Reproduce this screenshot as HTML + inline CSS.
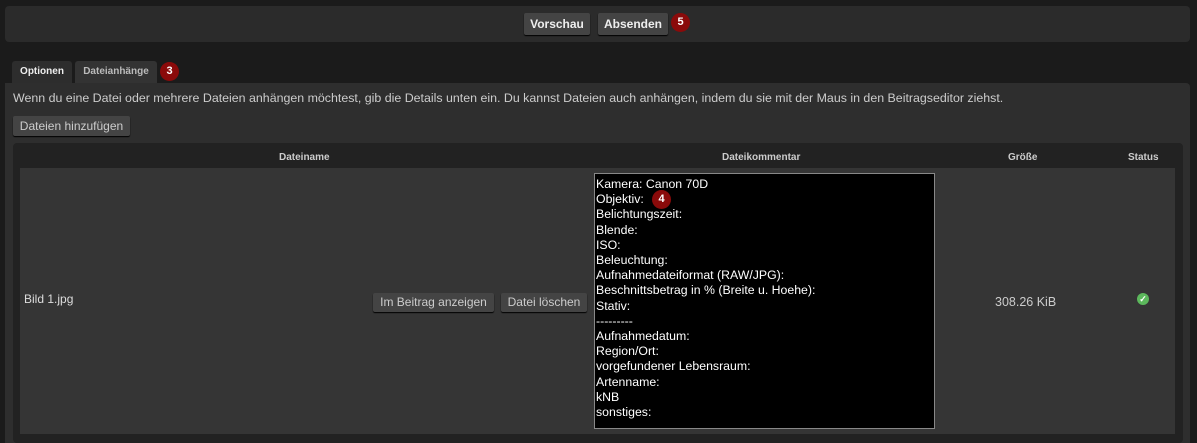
<!DOCTYPE html>
<html><head><meta charset="utf-8"><style>
*{box-sizing:border-box;margin:0;padding:0}
body{width:1197px;height:438px;overflow:hidden;background:#1b1b1b;font-family:"Liberation Sans",sans-serif;font-size:12px;color:#ddd;position:relative}
.abs{position:absolute}
.bar{left:5px;top:6px;width:1185px;height:36px;background:#2b2b2b;border-radius:4px}
.btn{position:absolute;background:#444;color:#eee;border-radius:2px;text-align:center;box-shadow:0 1px 1px #000}
.b5{font-weight:bold;font-size:12px;height:22px;line-height:22px}
.badge{position:absolute;width:19px;height:19px;border-radius:50%;background:#8a0a0a;color:#fff;font-weight:bold;font-size:11px;text-align:center;line-height:19px}
.tab{position:absolute;top:61px;height:22px;line-height:22px;background:#2d2d2d;border-radius:3px 3px 0 0;font-weight:bold;font-size:10px;text-align:center}
.panel{left:5px;top:83px;width:1185px;height:360px;background:#2e2e2e;border-radius:0 4px 0 0}
.tbl{left:13px;top:143px;width:1170px;height:300px;background:#222;border-radius:4px}
.row{left:20px;top:168px;width:1155px;height:266px;background:#353535}
.th{position:absolute;top:152px;font-weight:bold;font-size:10px;color:#ccc}
.ta{left:594px;top:173px;width:341px;height:256px;background:#000;border:1px solid #888;color:#fff;padding:3px 0 0 1px;line-height:15.2px;font-size:12.3px;white-space:pre}
</style></head><body>
<div class="abs bar"></div>
<div class="btn b5" style="left:524px;top:13px;width:66px">Vorschau</div>
<div class="btn b5" style="left:598px;top:13px;width:70px">Absenden</div>
<div class="badge" style="left:671px;top:13px">5</div>
<div class="abs panel"></div>
<div class="tab" style="left:12px;width:60px;color:#eee">Optionen</div>
<div class="tab" style="left:75px;width:82px;background:#333;color:#bbb">Dateianhänge</div>
<div class="badge" style="left:160px;top:62px">3</div>
<div class="abs" style="left:13px;top:91px;color:#ccc;font-size:12.4px">Wenn du eine Datei oder mehrere Dateien anhängen möchtest, gib die Details unten ein. Du kannst Dateien auch anhängen, indem du sie mit der Maus in den Beitragseditor ziehst.</div>
<div class="btn" style="left:13px;top:116px;width:117px;height:20px;line-height:20px;color:#ccc">Dateien hinzufügen</div>
<div class="abs tbl"></div>
<div class="th" style="left:279px">Dateiname</div>
<div class="th" style="left:722px">Dateikommentar</div>
<div class="th" style="left:1008px">Größe</div>
<div class="th" style="left:1128px">Status</div>
<div class="abs row"></div>
<div class="abs" style="left:24px;top:292px;color:#ddd">Bild 1.jpg</div>
<div class="btn" style="left:373px;top:293px;width:121px;height:19px;line-height:19px;color:#ccc">Im Beitrag anzeigen</div>
<div class="btn" style="left:501px;top:293px;width:86px;height:19px;line-height:19px;color:#ccc">Datei löschen</div>
<div class="abs ta">Kamera: Canon 70D
Objektiv: 
Belichtungszeit:
Blende:
ISO:
Beleuchtung:
Aufnahmedateiformat (RAW/JPG):
Beschnittsbetrag in % (Breite u. Hoehe):
Stativ:
---------
Aufnahmedatum:
Region/Ort:
vorgefundener Lebensraum:
Artenname:
kNB
sonstiges:</div>
<div class="badge" style="left:652px;top:190px">4</div>
<div class="abs" style="left:995px;top:295px;color:#ccc;font-size:12.5px">308.26 KiB</div>
<div class="abs" style="left:1137px;top:293px;width:12px;height:12px;border-radius:50%;background:#5cb85c;color:#fff;font-size:9px;line-height:12px;text-align:center;font-weight:bold">✓</div>
</body></html>
